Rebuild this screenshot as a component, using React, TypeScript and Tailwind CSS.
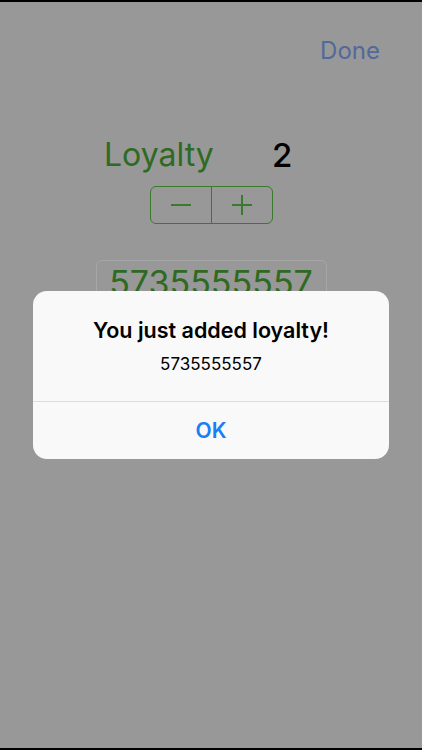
import React from "react";

export default function App() {
  return (
    <div
      className="relative w-[422px] h-[750px] overflow-hidden bg-[#989898] flex flex-col"
      style={{ fontFamily: "Inter, 'Liberation Sans', sans-serif" }}
    >
      <div className="h-[2px] bg-black shrink-0" />
      <div className="flex justify-end pr-[42px] pt-[35px] h-[64px]">
        <span className="text-[24px] leading-[28px] text-[#52699a]">Done</span>
      </div>
      <div className="flex items-center pl-[104px] mt-[69px] h-[40px]">
        <span className="text-[32px] leading-[40px] text-[#2f6a22] w-[168px]">Loyalty</span>
        <span className="text-[33px] leading-[40px] text-black font-medium">2</span>
      </div>
      <div className="flex justify-center mt-[11px]">
        <div className="flex w-[123px] h-[38px] border border-[#3a7a2c] rounded-[6px]">
          <div className="flex-1 flex items-center justify-center border-r border-[#3a7a2c]">
            <div className="w-[20px] h-[2px] bg-[#3a7a2c]" />
          </div>
          <div className="flex-1 flex items-center justify-center relative">
            <div className="w-[20px] h-[2px] bg-[#3a7a2c]" />
            <div className="absolute w-[2px] h-[20px] bg-[#3a7a2c]" />
          </div>
        </div>
      </div>
      <div className="flex justify-center mt-[36px]">
        <div className="w-[231px] h-[44px] border border-[#a6a6a6] rounded-[6px] flex justify-center overflow-hidden">
          <span className="text-[34px] leading-[44px] text-[#2f6a22]">5735555557</span>
        </div>
      </div>
      <div className="flex-1" />
      <div className="h-[2px] bg-black shrink-0" />

      <div className="absolute left-[33px] top-[291px] w-[356px] h-[168px] bg-[#f9f9f9] rounded-[14px] flex flex-col overflow-hidden">
        <div className="flex flex-col items-center pt-[25px] h-[110px]">
          <span className="text-[21.5px] leading-[28px] font-semibold text-black">You just added loyalty!</span>
          <span className="text-[17px] leading-[20px] text-black mt-[10px]">5735555557</span>
        </div>
        <div className="h-px bg-[#dcdcdc]" />
        <div className="flex-1 flex items-center justify-center">
          <span className="text-[21px] font-semibold text-[#1a7ef5]">OK</span>
        </div>
      </div>
    </div>
  );
}
